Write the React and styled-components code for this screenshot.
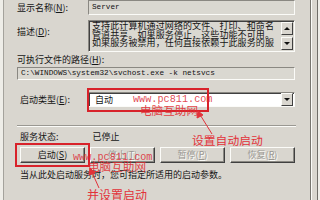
import React from "react"
import styled, { createGlobalStyle } from "styled-components"

const GlobalStyle = createGlobalStyle`
  html, body {
    margin: 0;
    padding: 0;
    background: #eeede8;
  }
  body {
    font-family: "Noto Sans CJK SC", "Noto Sans", sans-serif;
  }
`

const cjk = `"Noto Sans CJK SC", "Noto Sans", sans-serif`
const mono = `"Liberation Mono", "DejaVu Sans Mono", monospace`

const Screen = styled.div`
  position: relative;
  width: 320px;
  height: 200px;
  overflow: hidden;
  display: flex;
  background: #eeede8;
`

const Margin = styled.div`
  width: 3px;
  flex: none;
`

const Frame = styled.div`
  width: 308px;
  flex: none;
  box-sizing: border-box;
  height: 100%;
  background: #d9d6cf;
  border-left: 1px solid #a4a29c;
  border-right: 1px solid #77756f;
  padding: 0 14px 0 13px;
  font-family: ${cjk};
  font-size: 9px;
  color: #151515;
`

const Edge = styled.div`
  width: 7px;
  flex: none;
  box-sizing: border-box;
  height: 100%;
  background: #d9d6cf;
  border-left: 1px solid #fbfbf8;
  border-right: 1px solid #6f6d68;
`

const FieldRow = styled.div`
  display: grid;
  grid-template-columns: 71px 207px;
  align-items: ${p => p.$align || "center"};
  margin-top: ${p => p.$top || 0}px;
`

const Label = styled.div`
  line-height: 10px;
  white-space: nowrap;
  padding-top: ${p => p.$pad || 0}px;
  padding-left: ${p => p.$indent || 0}px;
  u {
    text-decoration: underline;
  }
`

const Sunken = styled.div`
  box-sizing: border-box;
  border: 1px solid;
  border-color: #8a8882 #fbfbf8 #fbfbf8 #8a8882;
  background: ${p => (p.$white ? "#ffffff" : "#dad8d1")};
  height: ${p => p.$h}px;
  margin-top: ${p => p.$top || 0}px;
  box-shadow: ${p => (p.$deep ? "inset 1px 1px 0 #404040" : "none")};
`

const PlainText = styled.div`
  font-family: ${mono};
  font-size: 7.7px;
  line-height: ${p => p.$lh || 13}px;
  padding-left: 3px;
  white-space: nowrap;
  color: #111;
`

const MemoBox = styled(Sunken)`
  display: flex;
`

const MemoText = styled.div`
  flex: 1;
  padding: 1px 0 0 3px;
  font-size: 9px;
  letter-spacing: 0.1px;
  line-height: 8.6px;
  white-space: nowrap;
  overflow: hidden;
`

const ScrollCol = styled.div`
  width: 12px;
  display: flex;
  flex-direction: column;
  justify-content: space-between;
  padding: 1px 1px 1px 0;
`

const ArrowBtn = styled.div`
  box-sizing: border-box;
  width: 12px;
  height: 13px;
  background: #d9d6cf;
  border: 1px solid;
  border-color: #fbfbf8 #404040 #404040 #fbfbf8;
  display: flex;
  align-items: center;
  justify-content: center;
`

const Tri = styled.div`
  width: 0;
  height: 0;
  border-left: 3px solid transparent;
  border-right: 3px solid transparent;
  ${p =>
    p.$down
      ? "border-top: 3px solid #111;"
      : "border-bottom: 3px solid #111;"}
`

const PathBox = styled(Sunken)`
  width: 278px;
`

const Combo = styled(Sunken)`
  display: flex;
  align-items: center;
  justify-content: space-between;
  padding: 0 1px 0 6px;
`

const ComboText = styled.span`
  font-size: 9px;
  line-height: 10px;
`

const Separator = styled.div`
  margin-top: 18px;
  height: 0;
  border-top: 1px solid #9a9892;
  border-bottom: 1px solid #fbfbf8;
`

const StatusRow = styled.div`
  display: flex;
  margin-top: 5px;
  line-height: 10px;
  padding-left: 3px;
`

const StatusValue = styled.span`
  margin-left: 34px;
`

const ButtonRow = styled.div`
  display: flex;
  gap: 5px;
  margin-top: 5px;
  padding-left: 3px;
`

const Button = styled.div`
  box-sizing: border-box;
  width: 65px;
  height: 16px;
  background: #d9d6cf;
  border: 1px solid;
  border-color: #fbfbf8 #404040 #404040 #fbfbf8;
  box-shadow: inset -1px -1px 0 #8a8882;
  display: flex;
  align-items: center;
  justify-content: center;
  font-size: 9px;
  line-height: 10px;
  color: ${p => (p.$disabled ? "#9a9892" : "#151515")};
  text-shadow: ${p => (p.$disabled ? "1px 1px 0 #fbfbf8" : "none")};
`

const Hint = styled.div`
  margin-top: 7px;
  padding-left: 3px;
  line-height: 10px;
  white-space: nowrap;
`

const RedBox = styled.div`
  position: absolute;
  left: ${p => p.$x}px;
  top: ${p => p.$y}px;
  width: ${p => p.$w}px;
  height: ${p => p.$h}px;
  box-sizing: border-box;
  border: 2px solid #d8222a;
`

const Watermark = styled.div`
  position: absolute;
  left: ${p => p.$x}px;
  top: ${p => p.$y}px;
  font-family: ${mono};
  font-size: 10.2px;
  line-height: 11px;
  color: rgba(220, 40, 50, 0.85);
  white-space: nowrap;
`

const WatermarkCn = styled.div`
  position: absolute;
  left: ${p => p.$x}px;
  top: ${p => p.$y}px;
  font-family: ${cjk};
  font-size: 11.6px;
  line-height: 12px;
  color: rgba(225, 45, 50, 0.9);
  white-space: nowrap;
`

const Note = styled.div`
  position: absolute;
  left: ${p => p.$x}px;
  top: ${p => p.$y}px;
  font-family: ${cjk};
  font-size: ${p => p.$size}px;
  line-height: 14px;
  color: #e2323a;
  white-space: nowrap;
`

const Arrows = styled.svg`
  position: absolute;
  left: 0;
  top: 0;
  pointer-events: none;
`

function App() {
  return (
    <>
      <GlobalStyle />
      <Screen>
        <Margin />
        <Frame>
          <FieldRow>
            <Label>
              显示名称(<u>N</u>):
            </Label>
            <Sunken $h={15}>
              <PlainText>Server</PlainText>
            </Sunken>
          </FieldRow>

          <FieldRow $align="start" $top={5}>
            <Label $pad={7}>
              描述(<u>D</u>):
            </Label>
            <MemoBox $h={32} $deep>
              <MemoText>
                支持此计算机通过网络的文件、打印、和命名
                <br />
                管道共享。如果服务停止，这些功能不可用。
                <br />
                如果服务被禁用，任何直接依赖于此服务的服
              </MemoText>
              <ScrollCol>
                <ArrowBtn>
                  <Tri />
                </ArrowBtn>
                <ArrowBtn>
                  <Tri $down />
                </ArrowBtn>
              </ScrollCol>
            </MemoBox>
          </FieldRow>

          <FieldRow $top={3}>
            <Label>
              可执行文件的路径(<u>H</u>):
            </Label>
          </FieldRow>
          <PathBox $h={13} $top={2}>
            <PlainText $lh={11}>
              C:\WINDOWS\system32\svchost.exe -k netsvcs
            </PlainText>
          </PathBox>

          <FieldRow $top={12}>
            <Label $indent={3}>
              启动类型(<u>E</u>):
            </Label>
            <Combo $h={15} $white $deep>
              <ComboText>自动</ComboText>
              <ArrowBtn>
                <Tri $down />
              </ArrowBtn>
            </Combo>
          </FieldRow>

          <Separator />

          <StatusRow>
            服务状态:
            <StatusValue>已停止</StatusValue>
          </StatusRow>

          <ButtonRow>
            <Button>
              启动(<u>S</u>)
            </Button>
            <Button $disabled>
              停止(<u>T</u>)
            </Button>
            <Button $disabled>
              暂停(<u>P</u>)
            </Button>
            <Button $disabled>
              恢复(<u>R</u>)
            </Button>
          </ButtonRow>

          <Hint>当从此处启动服务时，您可指定所适用的启动参数。</Hint>
        </Frame>
        <Edge />

        <RedBox $x={87} $y={88} $w={122} $h={24} />
        <Watermark $x={133} $y={94}>
          www.pc811.com
        </Watermark>
        <WatermarkCn $x={140} $y={104}>
          电脑互助网
        </WatermarkCn>

        <RedBox $x={15} $y={143} $w={75} $h={24} />
        <Watermark $x={73} $y={152}>
          www.pc811.com
        </Watermark>
        <WatermarkCn $x={88} $y={160}>
          电脑互助网
        </WatermarkCn>

        <Note $x={192} $y={133} $size={11.8}>
          设置自动启动
        </Note>
        <Note $x={87} $y={188} $size={12}>
          并设置启动
        </Note>

        <Arrows width="320" height="200" viewBox="0 0 320 200">
          <g stroke="#e2323a" strokeWidth="1" fill="#e2323a">
            <line x1="212" y1="134" x2="199" y2="113" />
            <polygon points="198,111 197,118 203,115" />
            <line x1="99" y1="188" x2="91" y2="170" />
            <polygon points="90,168 89,175 95,173" />
          </g>
        </Arrows>
      </Screen>
    </>
  )
}

export default App
